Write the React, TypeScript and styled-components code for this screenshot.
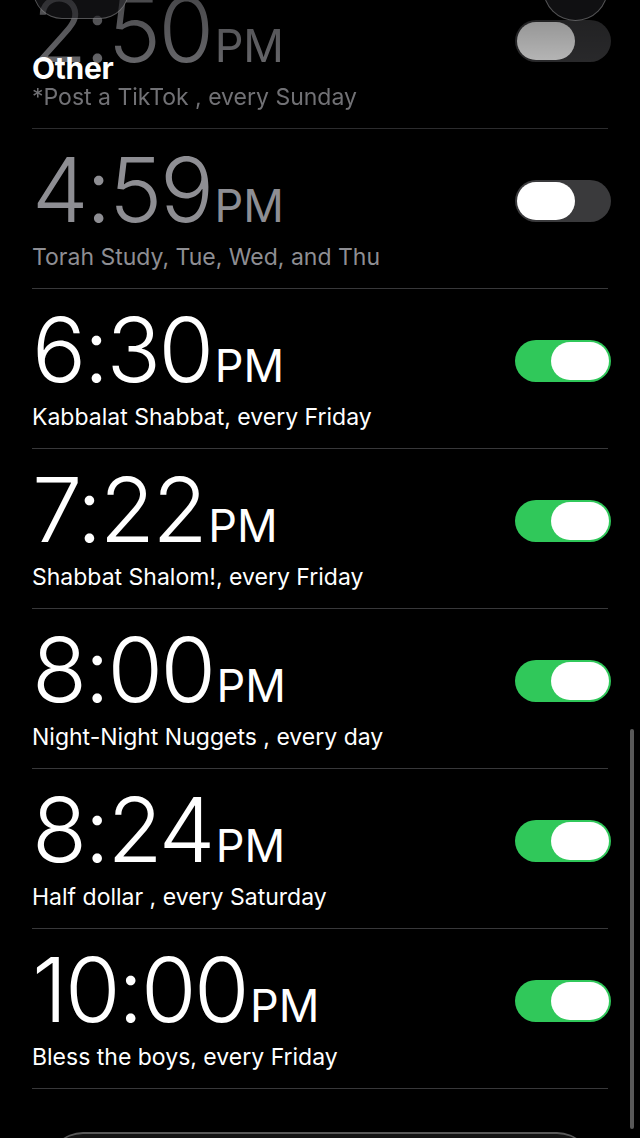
import { FC } from "react";
import styled, { createGlobalStyle } from "styled-components";

interface IAlarm {
  time: string;
  label: string;
  on: boolean;
}

const alarms: IAlarm[] = [
  { time: "2:50", label: "*Post a TikTok , every Sunday", on: false },
  { time: "4:59", label: "Torah Study, Tue, Wed, and Thu", on: false },
  { time: "6:30", label: "Kabbalat Shabbat, every Friday", on: true },
  { time: "7:22", label: "Shabbat Shalom!, every Friday", on: true },
  { time: "8:00", label: "Night-Night Nuggets , every day", on: true },
  { time: "8:24", label: "Half dollar , every Saturday", on: true },
  { time: "10:00", label: "Bless the boys, every Friday", on: true },
];

const GlobalStyle = createGlobalStyle`
  html, body {
    margin: 0;
    padding: 0;
    background: #000;
  }
  body {
    font-family: Inter, "Noto Sans", sans-serif;
    color: #fff;
  }
`;

const Screen = styled.div`
  position: relative;
  width: 640px;
  height: 1138px;
  overflow: hidden;
  background: #000;
`;

const List = styled.section`
  display: flex;
  flex-direction: column;
  margin-top: -31px;
`;

const Row = styled.div<{ $faded?: boolean }>`
  height: 159px;
  margin: 0 32px;
  border-bottom: 1px solid #38383a;
  display: flex;
  align-items: flex-start;
  justify-content: space-between;
  opacity: ${(p) => (p.$faded ? 0.8 : 1)};
  filter: ${(p) => (p.$faded ? "blur(0.6px)" : "none")};
`;

const Info = styled.div`
  display: flex;
  flex-direction: column;
  padding-top: 16px;
`;

const Time = styled.div<{ $on: boolean }>`
  display: flex;
  align-items: baseline;
  font-weight: 300;
  font-size: 90px;
  line-height: 90px;
  letter-spacing: -2.5px;
  color: ${(p) => (p.$on ? "#fff" : "#8e8e93")};
`;

const Meridiem = styled.span`
  font-size: 45px;
  font-weight: 400;
  letter-spacing: 0;
  margin-left: 3px;
`;

const Label = styled.div<{ $on: boolean }>`
  margin-top: -8px;
  font-size: 23px;
  line-height: 28px;
  color: ${(p) => (p.$on ? "#fff" : "#8e8e93")};
`;

const Track = styled.div<{ $on: boolean }>`
  margin-top: 51px;
  margin-right: -3px;
  width: 96px;
  height: 42px;
  border-radius: 21px;
  background: ${(p) => (p.$on ? "#30c85a" : "#3a3a3c")};
  display: flex;
  align-items: center;
  justify-content: ${(p) => (p.$on ? "flex-end" : "flex-start")};
  padding: 0 2px;
  box-sizing: border-box;
`;

const Knob = styled.div`
  width: 58px;
  height: 38px;
  border-radius: 19px;
  background: #fff;
`;

const TopFade = styled.div`
  position: absolute;
  left: 0;
  right: 0;
  top: 0;
  height: 90px;
  background: linear-gradient(rgba(0, 0, 0, 0.35), rgba(0, 0, 0, 0));
  pointer-events: none;
`;

const SectionHeader = styled.h2`
  position: absolute;
  left: 32px;
  top: 49px;
  margin: 0;
  font-size: 30px;
  font-weight: 700;
  letter-spacing: -0.3px;
  line-height: 38px;
  color: #fff;
`;

const GlassPill = styled.div`
  position: absolute;
  left: 33px;
  top: -40px;
  width: 94px;
  height: 57px;
  border-radius: 29px;
  border: 1px solid rgba(255, 255, 255, 0.28);
  background: rgba(30, 30, 32, 0.55);
`;

const GlassCircle = styled.div`
  position: absolute;
  left: 543px;
  top: -44px;
  width: 63px;
  height: 63px;
  border-radius: 50%;
  border: 1px solid rgba(255, 255, 255, 0.28);
  background: rgba(30, 30, 32, 0.55);
`;

const BottomBar = styled.div`
  position: absolute;
  left: 48px;
  top: 1132px;
  width: 544px;
  height: 70px;
  border-radius: 35px;
  border-top: 2px solid rgba(255, 255, 255, 0.3);
  background: #141414;
`;

const ScrollThumb = styled.div`
  position: absolute;
  right: 6px;
  top: 729px;
  width: 4px;
  height: 400px;
  border-radius: 2px;
  background: rgba(255, 255, 255, 0.35);
`;

const Toggle: FC<{ on: boolean }> = ({ on }) => (
  <Track $on={on}>
    <Knob />
  </Track>
);

const App: FC = () => {
  return (
    <Screen>
      <GlobalStyle />
      <List>
        {alarms.map((a, i) => (
          <Row key={a.time} $faded={i === 0}>
            <Info>
              <Time $on={a.on}>
                {a.time}
                <Meridiem>PM</Meridiem>
              </Time>
              <Label $on={a.on}>{a.label}</Label>
            </Info>
            <Toggle on={a.on} />
          </Row>
        ))}
      </List>
      <TopFade />
      <SectionHeader>Other</SectionHeader>
      <GlassPill />
      <GlassCircle />
      <ScrollThumb />
      <BottomBar />
    </Screen>
  );
};

export default App;
